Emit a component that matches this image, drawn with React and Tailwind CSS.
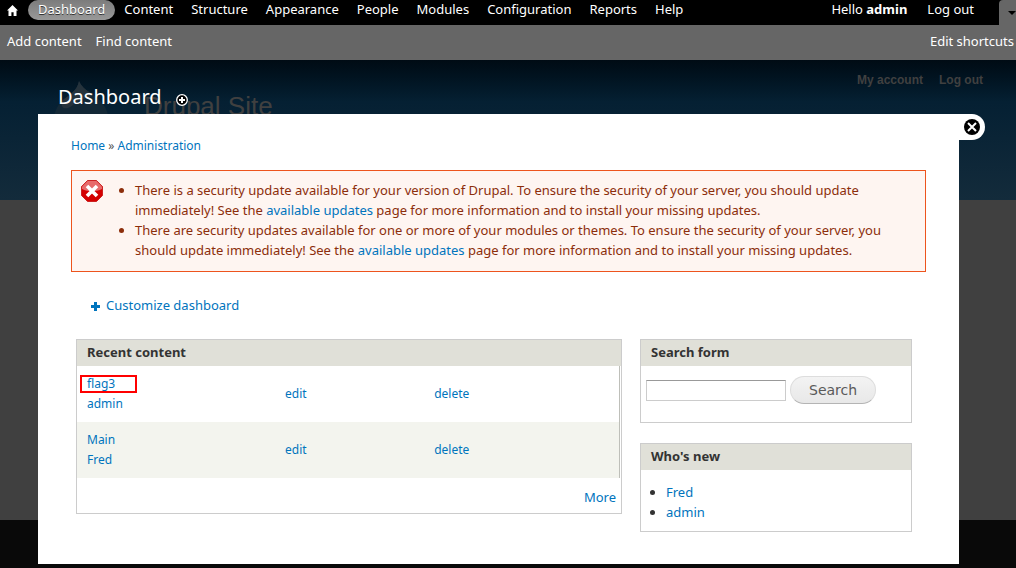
import React from 'react';

const menu = ['Content', 'Structure', 'Appearance', 'People', 'Modules', 'Configuration', 'Reports', 'Help'];

const recent = [
  { title: 'flag3', author: 'admin', marked: true },
  { title: 'Main', author: 'Fred', marked: false },
];

function Toolbar() {
  return (
    <nav aria-label="Administration" className="flex h-[25px] items-start justify-between bg-black pl-1 text-white">
      <div className="flex items-center">
        <a href="#home" aria-label="Home" className="mr-1 flex h-5 w-5 items-center pl-[3px]">
          <svg viewBox="0 0 11 11" className="h-[11px] w-[11px]" fill="currentColor" aria-hidden="true">
            <path d="M5.5 0 L11 5.6 H9.5 V11 H6.6 V7.2 H4.4 V11 H1.5 V5.6 H0 Z" />
          </svg>
        </a>
        <a href="#dashboard" className="flex h-5 items-center rounded-full bg-linear-to-b from-[#7c7c7c] to-[#999] px-[10px] pb-[2px] [text-shadow:0_1px_0_#333]">
          Dashboard
        </a>
        {menu.map((item) => (
          <a key={item} href={'#' + item.toLowerCase()} className="flex h-5 items-center px-[9px] pb-[2px]">
            {item}
          </a>
        ))}
      </div>
      <div className="flex">
        <a href="#user" className="flex h-5 items-center px-[10px] pb-[2px]">
          <span>Hello <b>admin</b></span>
        </a>
        <a href="#logout" className="mr-[15px] flex h-5 items-center px-[10px] pb-[2px]">Log out</a>
        <button type="button" aria-label="Toggle shortcuts" className="flex h-[25px] w-[17px] items-center justify-end rounded-tl bg-[#666] text-black">
          <svg viewBox="0 0 8 4" className="h-1 w-2" fill="currentColor" aria-hidden="true">
            <path d="M0 0H8L4 4Z" />
          </svg>
        </button>
      </div>
    </nav>
  );
}

function Block({ title, children }) {
  return (
    <section className="border border-[#ccc] bg-white">
      <h2 className="flex h-[26px] items-center bg-[#e0e0d8] px-[10px] pb-[2px] text-[13px] font-bold">{title}</h2>
      {children}
    </section>
  );
}

function SitePage() {
  return (
    <div className="col-start-1 row-start-1 flex flex-col font-['Liberation_Sans',sans-serif] text-[#404040]">
      <header className="flex h-[140px] justify-between bg-linear-to-b from-[#000b14] via-[#052033] via-30% to-[#132b3b] pr-[33px] pl-[53px]">
        <div className="flex items-start gap-[34px]">
          <svg viewBox="0 0 57 66" className="mt-5 h-[66px] w-[57px]" aria-hidden="true">
            <path d="M26 1C30 11 42 14 50 24C58 35 57 48 48 57C38 67 18 67 8 57C-2 47 -1 31 9 21C15 15 24 12 26 1Z" fill="#132836" />
            <path d="M26 1C29 8 35 11 41 15C33 19 28 18 20 25C14 30 7 30 9 21C15 15 24 12 26 1Z" fill="#26333c" />
          </svg>
          <p className="pt-[31px] text-[26px] leading-[30px]">Drupal Site</p>
        </div>
        <div className="flex gap-4 pt-[10px] text-xs leading-5 font-bold">
          <a href="#account">My account</a>
          <a href="#site-logout">Log out</a>
        </div>
      </header>
      <div className="flex-1 bg-[#404040]" />
      <footer className="h-12 bg-[#090909]" />
    </div>
  );
}

export default function App() {
  return (
    <div className="font-['Noto_Sans',sans-serif] text-[13px] leading-5 text-[#333]">
      <div>
        <Toolbar />
        <div className="flex h-[35px] items-center justify-between bg-[#666] pr-[2px] pb-[3px] pl-[7px] text-white">
          <div className="flex gap-[14px]">
            <a href="#add">Add content</a>
            <a href="#find">Find content</a>
          </div>
          <a href="#edit-shortcuts">Edit shortcuts</a>
        </div>
      </div>

      <div className="grid">
        <SitePage />
        <div className="z-10 col-start-1 row-start-1 mb-1 pr-[31px] pl-[38px]">
          <div className="flex h-[54px] items-center gap-[14px] pt-5 pl-5 text-white">
            <h1 className="text-xl">Dashboard</h1>
            <button type="button" aria-label="Add to shortcuts" className="mt-[6px]">
              <svg viewBox="0 0 12 12" className="h-3 w-3" aria-hidden="true">
                <circle cx="6" cy="6" r="5.3" fill="#000" stroke="#fff" strokeWidth="1.3" />
                <path d="M6 3V9M3 6H9" stroke="#fff" strokeWidth="2" />
              </svg>
            </button>
          </div>
          <div className="flex items-start">
            <main className="min-w-0 flex-1 bg-white px-[33px] pt-[22px] pb-8">
              <nav aria-label="Breadcrumb" className="mb-[14px] text-xs leading-5 text-[#0074bd]">
                <a href="#home">Home</a> <span className="text-[#555]">»</span> <a href="#administration">Administration</a>
              </nav>

              <div role="alert" className="flex gap-4 border border-[#ed541d] bg-[#fef5f1] pt-[9px] pr-2 pb-[11px] pl-[9px] text-[#8c2e0b]">
                <svg viewBox="0 0 22 22" className="h-[22px] w-[22px] shrink-0" aria-hidden="true">
                  <path d="M6.5 0.5H15.5L21.5 6.5V15.5L15.5 21.5H6.5L0.5 15.5V6.5Z" fill="#d40000" stroke="#c22" />
                  <path d="M6.5 1H15.5L21 6.5V9C15 12 7 12 1 9V6.5Z" fill="#e76b6b" />
                  <path d="M6 6L16 16M16 6L6 16" stroke="#fff" strokeWidth="3.6" />
                </svg>
                <ul className="list-disc pl-4">
                  <li>
                    There is a security update available for your version of Drupal. To ensure the security of your server, you should update immediately! See the <a href="#updates" className="text-[#0074bd]">available updates</a> page for more information and to install your missing updates.
                  </li>
                  <li>
                    There are security updates available for one or more of your modules or themes. To ensure the security of your server, you should update immediately! See the <a href="#module-updates" className="text-[#0074bd]">available updates</a> page for more information and to install your missing updates.
                  </li>
                </ul>
              </div>

              <a href="#customize" className="mt-[23px] ml-5 flex w-fit items-center gap-[6px] text-[#0074bd]">
                <svg viewBox="0 0 9 9" className="mt-[2px] h-[9px] w-[9px]" fill="currentColor" aria-hidden="true">
                  <path d="M3 0H6V3H9V6H6V9H3V6H0V3H3Z" />
                </svg>
                Customize dashboard
              </a>

              <div className="mt-6 mr-[14px] ml-[5px] grid grid-cols-[1fr_272px] items-start gap-[18px]">
                <Block title="Recent content">
                  <div className="pr-[1px]">
                    <table className="w-full table-fixed border-r border-[#bebfb9] text-left text-xs leading-5 text-[#0074bd]">
                      <colgroup>
                        <col className="w-[36.5%]" />
                        <col className="w-[27.5%]" />
                        <col />
                      </colgroup>
                      <tbody>
                        {recent.map((r) => (
                          <tr key={r.title} className="h-14 even:bg-[#f3f4ee]">
                            <td className="px-[10px]">
                              <div className="relative">
                                <a href={'#' + r.title}>{r.title}</a>
                                {r.marked && <span className="absolute top-[1px] -left-[7px] h-[18px] w-[57px] border-2 border-[#f00]" />}
                              </div>
                              <a href={'#user-' + r.author}>{r.author}</a>
                            </td>
                            <td className="px-[10px]"><a href="#edit">edit</a></td>
                            <td className="px-[10px]"><a href="#delete">delete</a></td>
                          </tr>
                        ))}
                      </tbody>
                    </table>
                  </div>
                  <div className="flex h-[35px] items-center justify-end pt-[2px] pr-[5px]">
                    <a href="#more" className="text-[#0074bd]">More</a>
                  </div>
                </Block>

                <div className="flex flex-col gap-5">
                  <Block title="Search form">
                    <form className="flex items-center gap-1 px-[5px] pt-[10px] pb-[18px]" onSubmit={(e) => e.preventDefault()}>
                      <input type="text" aria-label="Search" className="h-[21px] w-[140px] border border-[#ccc] border-t-[#999] bg-white px-1" />
                      <button type="submit" className="h-7 rounded-full border border-[#ddd] border-b-[#b4b4b4] bg-linear-to-b from-[#f3f3f3] to-[#e8e8e8] px-[18px] font-['DejaVu_Sans',sans-serif] text-sm text-[#5a5a5a]">
                        Search
                      </button>
                    </form>
                  </Block>
                  <Block title="Who's new">
                    <ul className="list-disc pt-3 pb-[9px] pl-[25px]">
                      <li><a href="#fred" className="text-[#0074bd]">Fred</a></li>
                      <li><a href="#admin" className="text-[#0074bd]">admin</a></li>
                    </ul>
                  </Block>
                </div>
              </div>
            </main>
            <button type="button" aria-label="Close overlay" className="flex h-[26px] w-[26px] items-center justify-center rounded-r-full bg-white">
              <svg viewBox="0 0 16 16" className="h-4 w-4" aria-hidden="true">
                <circle cx="8" cy="8" r="8" fill="#000" />
                <path d="M4 4L12 12M12 4L4 12" stroke="#fff" strokeWidth="2" />
              </svg>
            </button>
          </div>
        </div>
      </div>
    </div>
  );
}
